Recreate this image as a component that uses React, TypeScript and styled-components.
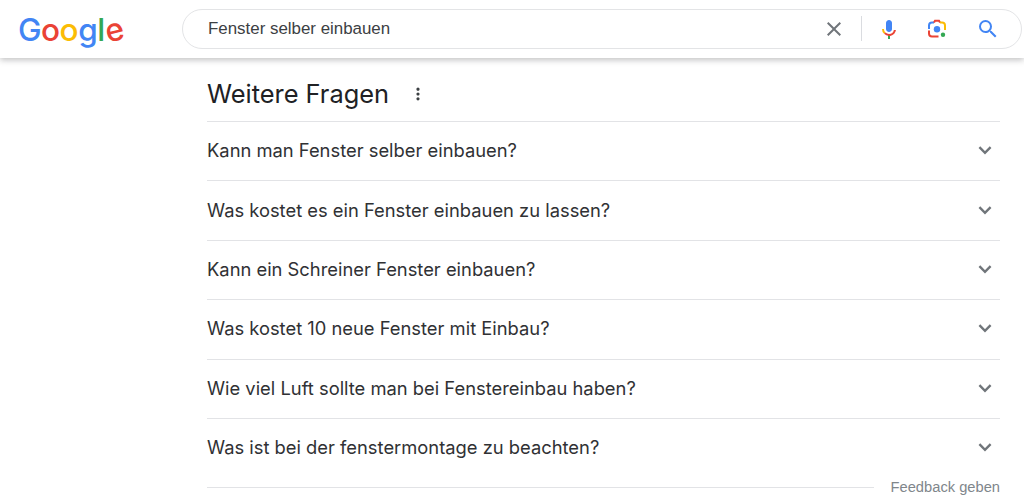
import styled, { createGlobalStyle } from 'styled-components';

const QUESTIONS = [
  'Kann man Fenster selber einbauen?',
  'Was kostet es ein Fenster einbauen zu lassen?',
  'Kann ein Schreiner Fenster einbauen?',
  'Was kostet 10 neue Fenster mit Einbau?',
  'Wie viel Luft sollte man bei Fenstereinbau haben?',
  'Was ist bei der fenstermontage zu beachten?',
];

const LOGO_LETTERS = [
  { letter: 'G', color: '#4285f4' },
  { letter: 'o', color: '#ea4335' },
  { letter: 'o', color: '#fbbc05' },
  { letter: 'g', color: '#4285f4' },
  { letter: 'l', color: '#34a853' },
  { letter: 'e', color: '#ea4335', tilt: -14 },
];

export default function App() {
  return (
    <>
      <GlobalStyle />
      <Header>
        <Logo>
          {LOGO_LETTERS.map(({ letter, color, tilt }, i) => (
            <LogoLetter key={i} $color={color} $tilt={tilt ?? 0}>
              {letter}
            </LogoLetter>
          ))}
        </Logo>
        <SearchBox>
          <SearchText>Fenster selber einbauen</SearchText>
          <ClearButton>
            <svg width="24" height="24" viewBox="0 0 24 24">
              <path
                d="M19 6.41 17.59 5 12 10.59 6.41 5 5 6.41 10.59 12 5 17.59 6.41 19 12 13.41 17.59 19 19 17.59 13.41 12z"
                fill="#70757a"
              />
            </svg>
          </ClearButton>
          <Divider />
          <IconButton $left={15}>
            <svg width="24" height="24" viewBox="0 0 24 24">
              <path d="M12 15c1.66 0 3-1.31 3-2.97V6c0-1.66-1.34-3-3-3S9 4.34 9 6v6.03C9 13.69 10.34 15 12 15z" fill="#4285f4" />
              <path d="M11 18.08h2V22h-2z" fill="#34a853" />
              <path d="M7.05 16.87A7 7 0 0 1 5 12h2c0 1.38.56 2.63 1.46 3.54z" fill="#fbbc05" />
              <path d="M12 17a5 5 0 0 1-3.54-1.46l-1.41 1.33A7 7 0 0 0 12 19c3.53 0 6.43-2.61 6.92-6H16.9A5 5 0 0 1 12 17z" fill="#ea4335" />
            </svg>
          </IconButton>
          <IconButton $left={24}>
            <svg width="24" height="24" viewBox="0 0 24 24">
              <path d="M4 13.5v3A3 3 0 0 0 7 19.5h6.5" fill="none" stroke="#ea4335" strokeWidth="2" />
              <path d="M4 12V8.5a3 3 0 0 1 3-3h2" fill="none" stroke="#4285f4" strokeWidth="2" />
              <path d="M9 5.5l1-1.7h4l1 1.7" fill="none" stroke="#ea4335" strokeWidth="2" />
              <path d="M15 5.5h2a3 3 0 0 1 3 3V13" fill="none" stroke="#fbbc05" strokeWidth="2" />
              <circle cx="12" cy="12.2" r="3.2" fill="#4285f4" />
              <circle cx="18" cy="17.8" r="2.2" fill="#34a853" />
            </svg>
          </IconButton>
          <IconButton $left={27}>
            <svg width="24" height="24" viewBox="0 0 24 24">
              <path
                d="M15.5 14h-.79l-.28-.27A6.47 6.47 0 0 0 16 9.5 6.5 6.5 0 1 0 9.5 16c1.61 0 3.09-.59 4.23-1.57l.27.28v.79l5 4.99L20.49 19l-4.99-5zm-6 0C7.01 14 5 11.99 5 9.5S7.01 5 9.5 5 14 7.01 14 9.5 11.99 14 9.5 14z"
                fill="#4285f4"
              />
            </svg>
          </IconButton>
        </SearchBox>
      </Header>
      <Main>
        <TitleRow>
          <Title>Weitere Fragen</Title>
          <svg width="24" height="24" viewBox="0 0 24 24">
            <path
              d="M12 8c1.1 0 2-.9 2-2s-.9-2-2-2-2 .9-2 2 .9 2 2 2zm0 2c-1.1 0-2 .9-2 2s.9 2 2 2 2-.9 2-2-.9-2-2-2zm0 6c-1.1 0-2 .9-2 2s.9 2 2 2 2-.9 2-2-.9-2-2-2z"
              fill="#3c4043"
              transform="translate(2.4 2.4) scale(0.8)"
            />
          </svg>
        </TitleRow>
        <div>
          {QUESTIONS.map((question) => (
            <QuestionRow key={question}>
              <QuestionText>{question}</QuestionText>
              <svg width="24" height="24" viewBox="0 0 24 24">
                <path d="M6.4 9.2 12 14.8 17.6 9.2" fill="none" stroke="#70757a" strokeWidth="2.4" />
              </svg>
            </QuestionRow>
          ))}
        </div>
        <FeedbackRow>
          <FeedbackLine />
          <FeedbackLink>Feedback geben</FeedbackLink>
        </FeedbackRow>
      </Main>
    </>
  );
}

const GlobalStyle = createGlobalStyle`
  html, body {
    margin: 0;
    padding: 0;
    height: 504px;
    overflow: hidden;
    background: #fff;
    font-family: Inter, "Liberation Sans", sans-serif;
  }
`;

const Header = styled.header`
  display: flex;
  align-items: center;
  height: 58px;
  padding: 0 2px 0 18px;
  box-sizing: border-box;
  background: #fff;
  box-shadow: 0 2px 6px rgba(32, 33, 36, 0.28);
`;

const Logo = styled.div`
  display: flex;
  width: 164px;
  flex-shrink: 0;
  font-family: Inter, sans-serif;
  font-size: 31.5px;
  font-weight: 500;
  line-height: 40px;
  letter-spacing: -0.5px;
  margin-top: 1px;
`;

const LogoLetter = styled.span<{ $color: string; $tilt: number }>`
  display: inline-block;
  color: ${(p) => p.$color};
  transform: rotate(${(p) => p.$tilt}deg);
`;

const SearchBox = styled.div`
  display: flex;
  align-items: center;
  flex: 1;
  height: 40px;
  margin-top: -1px;
  padding: 0 21px 0 25px;
  box-sizing: border-box;
  border: 1px solid #e3e4e6;
  border-radius: 20px;
`;

const SearchText = styled.div`
  flex: 1;
  font-size: 16.9px;
  font-family: "Liberation Sans", Arial, sans-serif;
  color: #3c4043;
`;

const ClearButton = styled.div`
  display: flex;
  margin-right: 15px;
`;

const Divider = styled.div`
  width: 1px;
  height: 25px;
  background: #dadce0;
`;

const IconButton = styled.div<{ $left: number }>`
  display: flex;
  margin-left: ${(p) => p.$left}px;
`;

const Main = styled.main`
  width: 793px;
  margin-left: 207px;
`;

const TitleRow = styled.div`
  display: flex;
  align-items: center;
  gap: 17px;
  height: 63px;
  padding-top: 8px;
  box-sizing: border-box;
`;

const Title = styled.h2`
  margin: 0;
  font-size: 25.4px;
  font-weight: 400;
  color: #202124;
`;

const QuestionRow = styled.div`
  display: flex;
  align-items: center;
  justify-content: space-between;
  height: 59.4px;
  padding-right: 3px;
  padding-bottom: 2px;
  box-sizing: border-box;
  border-top: 1px solid #e2e3e6;
`;

const QuestionText = styled.span`
  font-size: 18.35px;
  color: #303134;
`;

const FeedbackRow = styled.div`
  display: flex;
  align-items: center;
  gap: 17px;
  padding-top: 2px;
`;

const FeedbackLine = styled.div`
  flex: 1;
  height: 1px;
  background: #e2e3e6;
`;

const FeedbackLink = styled.span`
  font-size: 14.7px;
  font-family: "Liberation Sans", Arial, sans-serif;
  color: #80868b;
`;
